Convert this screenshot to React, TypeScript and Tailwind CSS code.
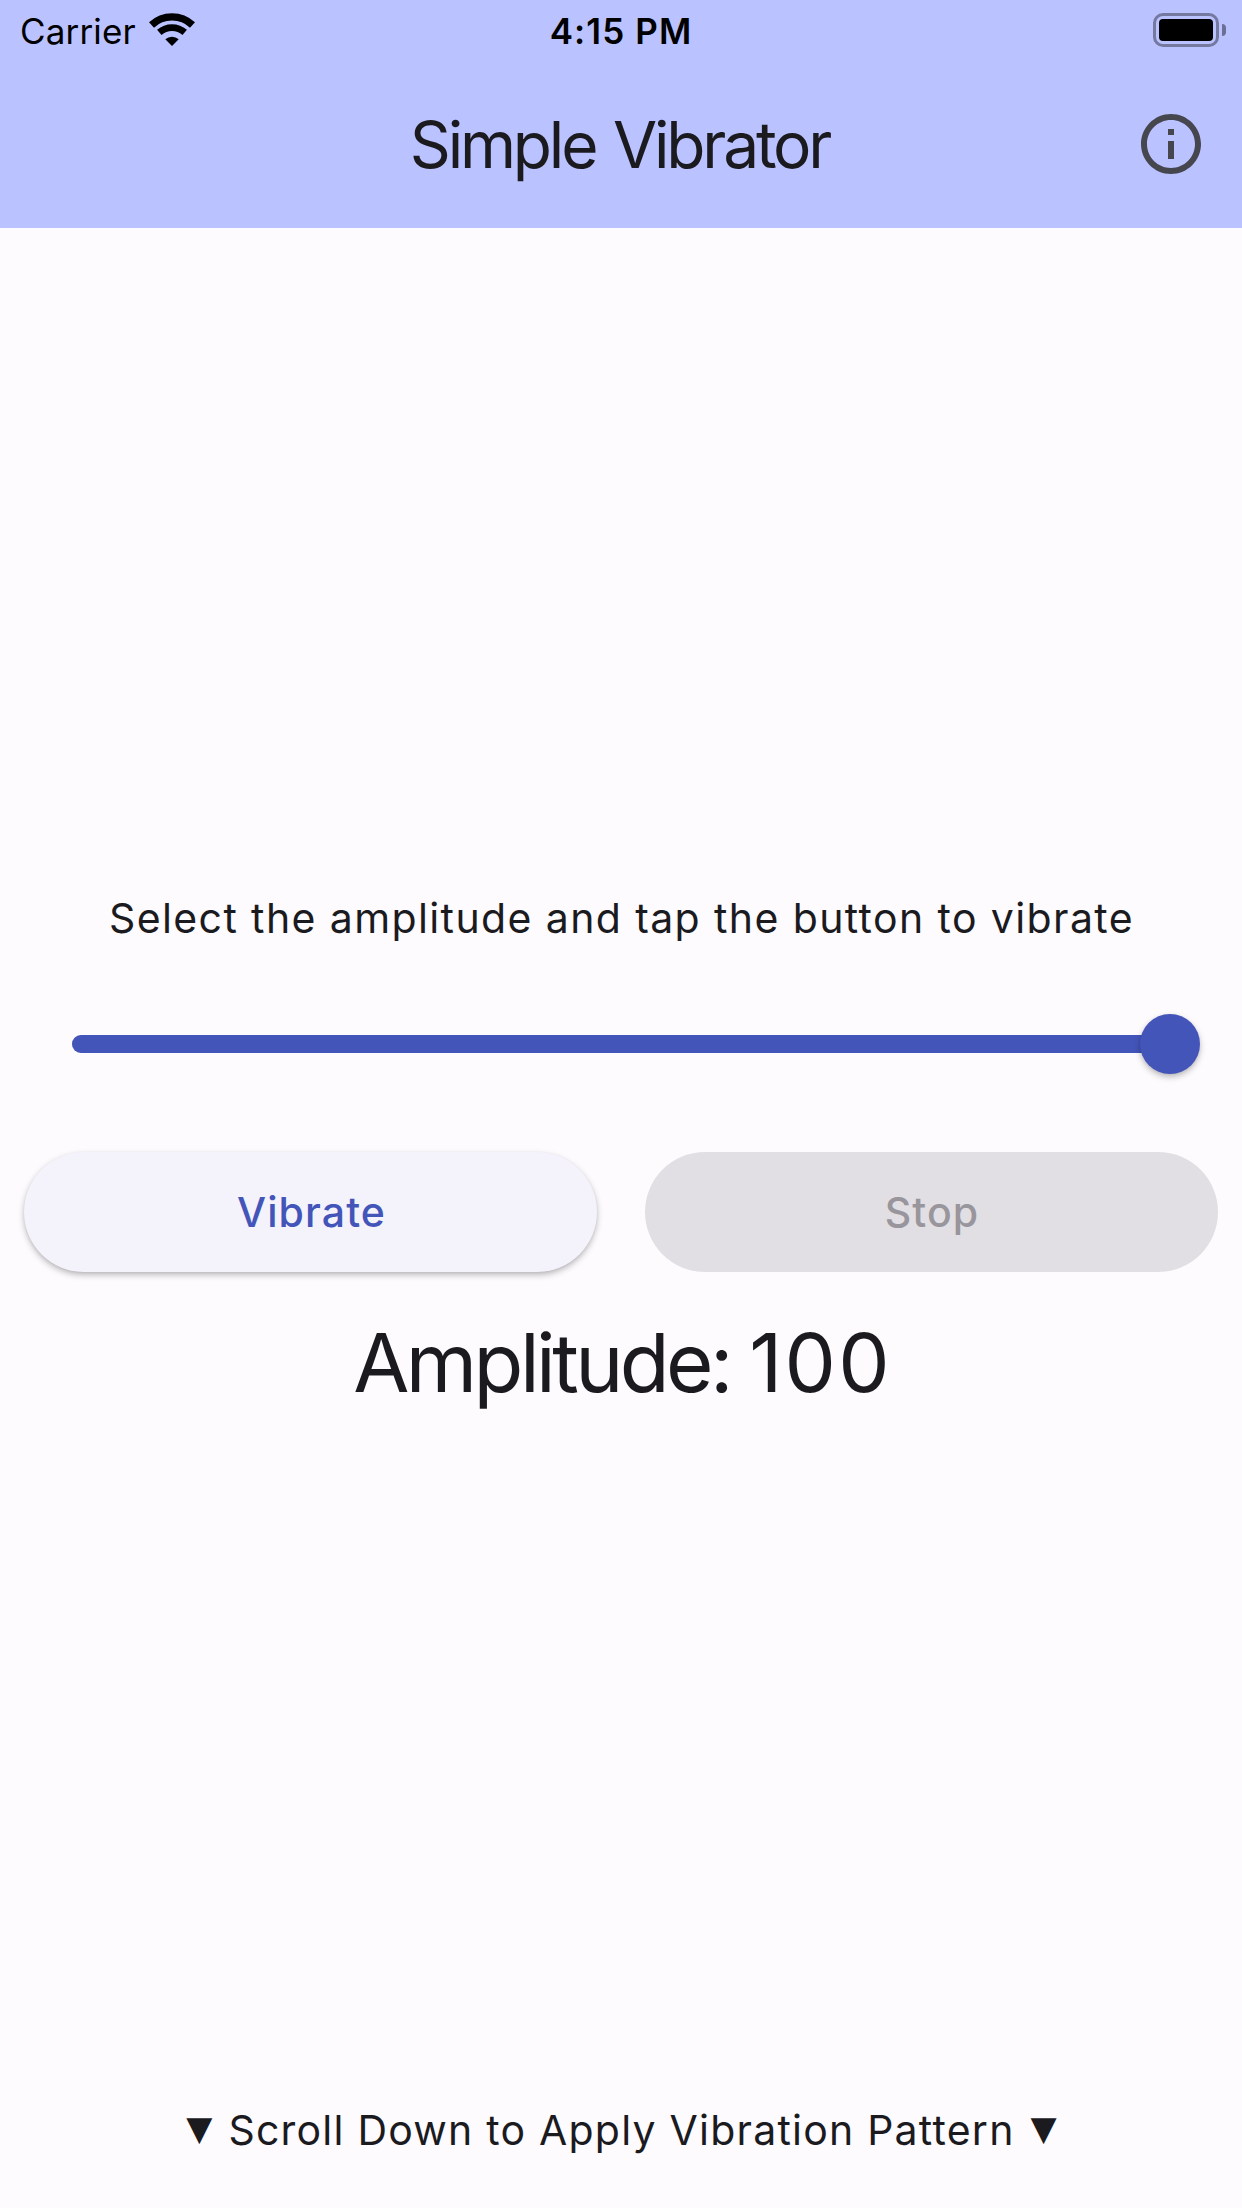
import { useState } from "react";
import { MdInfoOutline } from "react-icons/md";

const MAX_AMPLITUDE = 100;

export default function App() {
  const [amplitude] = useState(100);
  const [vibrating, setVibrating] = useState(false);

  return (
    <div className="flex h-[2208px] w-[1242px] flex-col overflow-hidden bg-[#fefbff] font-['Inter',sans-serif] text-[#1b1b1f]">
      <header className="bg-[#bac3ff]">
        <StatusBar />
        <div className="grid h-[168px] grid-cols-[1fr_auto_1fr] items-center px-[35px]">
          <span />
          <h1 className="pt-px pr-[3px] text-[64px] leading-none tracking-[-3.2px] [word-spacing:3px]">Simple Vibrator</h1>
          <button className="justify-self-end" aria-label="Info">
            <MdInfoOutline className="size-[72px] text-[#46464f]" />
          </button>
        </div>
      </header>

      <main className="flex flex-1 flex-col pt-[654px]">
        <p className="flex h-[72px] items-center justify-center pt-0.5 pl-px text-[41px] tracking-[1.39px] whitespace-nowrap">
          Select the amplitude and tap the button to vibrate
        </p>

        <AmplitudeSlider value={amplitude} />

        <div className="mt-9 grid grid-cols-2 gap-12 px-6">
          <button
            onClick={() => setVibrating(true)}
            className="h-[120px] rounded-full bg-[#f4f2fb] pt-0.5 pl-0.5 text-[41px] font-medium tracking-[1.1px] text-[#4355b9] shadow-[0_3px_6px_rgba(0,0,0,0.25),0_1px_3px_rgba(0,0,0,0.06)]"
          >
            Vibrate
          </button>
          <button
            disabled={!vibrating}
            onClick={() => setVibrating(false)}
            className="h-[120px] rounded-full bg-[#e1dfe4] pt-0.5 pl-px text-[41px] font-medium tracking-[1.1px] text-[#98969c]"
          >
            Stop
          </button>
        </div>

        <div className="mt-[30px] flex h-[120px] items-center justify-center pt-0.5 pl-[3px] text-[81.5px] whitespace-pre">
          <span className="tracking-[-3.6px]">Amplitude: </span>
          <span className="tracking-[2.2px]">{amplitude}</span>
        </div>

        <footer className="mt-auto mb-[47px] flex h-[60px] items-center justify-center gap-4 pl-px text-[41px] tracking-[1.22px] whitespace-nowrap">
          <Arrow />
          <span>Scroll Down to Apply Vibration Pattern</span>
          <Arrow />
        </footer>
      </main>
    </div>
  );
}

function Arrow() {
  return <span className="pb-[7px] font-['DejaVu_Sans',sans-serif] text-[34px] leading-none tracking-normal">▼</span>;
}

function AmplitudeSlider({ value }: { value: number }) {
  return (
    <div className="mt-[18px] flex h-[144px] items-center px-[72px]">
      <div className="relative h-[18px] w-full rounded-full bg-[#c7c5d0]">
        <div
          className="h-full rounded-full bg-[#4355b9]"
          style={{ width: `${(value / MAX_AMPLITUDE) * 100}%` }}
        />
        <div
          className="absolute top-1/2 size-[60px] -translate-x-1/2 -translate-y-1/2 rounded-full bg-[#4355b9] shadow-[0_3px_6px_rgba(0,0,0,0.25),0_1px_3px_rgba(0,0,0,0.06)]"
          style={{ left: `${(value / MAX_AMPLITUDE) * 100}%` }}
        />
      </div>
    </div>
  );
}

function StatusBar() {
  return (
    <div className="grid h-[60px] grid-cols-[1fr_auto_1fr] items-center px-4 text-[35px] leading-none text-black">
      <div className="flex items-center gap-[13px] pl-1">
        <span className="pt-0.5 tracking-[0.15px]">Carrier</span>
        <WifiIcon />
      </div>
      <span className="pt-0.5 font-semibold tracking-[1.1px]">4:15 PM</span>
      <div className="flex items-center justify-self-end gap-[3px]">
        <div className="h-[34px] w-[66px] rounded-[10px] border-3 border-[#7579a0] p-[3px]">
          <div className="h-full rounded-[4px] bg-black" />
        </div>
        <div className="h-3 w-1 rounded-r-full bg-[#6b6f96]" />
      </div>
    </div>
  );
}

function WifiIcon() {
  return (
    <svg viewBox="0 0 46 34" className="h-[34px] w-[46px]" fill="none" stroke="black">
      <path d="M2.5 12A30 30 0 0 1 43.5 12" strokeWidth="7.4" />
      <path d="M10.3 19.4A19.3 19.3 0 0 1 35.7 19.4" strokeWidth="6.8" />
      <path d="M23 33L16.3 26.3A10 10 0 0 1 29.7 26.3Z" fill="black" stroke="none" />
    </svg>
  );
}
